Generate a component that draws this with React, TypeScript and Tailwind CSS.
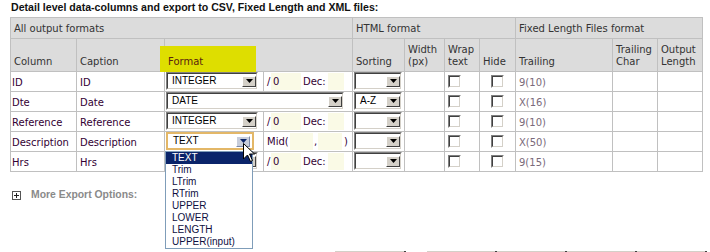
import React from "react";

const rows = [
  { col: "ID", cap: "ID", fmt: "INTEGER", kind: "num", sort: "", trail: "9(10)" },
  { col: "Dte", cap: "Date", fmt: "DATE", kind: "date", sort: "A-Z", trail: "X(16)" },
  { col: "Reference", cap: "Reference", fmt: "INTEGER", kind: "num", sort: "", trail: "9(10)" },
  { col: "Description", cap: "Description", fmt: "TEXT", kind: "text", sort: "", trail: "X(50)" },
  // format text of this row sits under the open list, so it is left blank
  { col: "Hrs", cap: "Hrs", fmt: "", kind: "num", sort: "", trail: "9(15)" },
];

const options = ["TEXT", "Trim", "LTrim", "RTrim", "UPPER", "LOWER", "LENGTH", "UPPER(input)"];

function Arrow({ color = "#000" }: { color?: string }) {
  return (
    <svg width="7" height="4" viewBox="0 0 7 4">
      <polygon points="0,0 7,0 3.5,4" fill={color} />
    </svg>
  );
}

function DropButton({ focused }: { focused?: boolean }) {
  return focused ? (
    <div className="flex h-[11px] w-[14px] items-center justify-center border border-t-[#ffffff] border-l-[#ffffff] border-r-[#7b88a8] border-b-[#7b88a8] bg-[#c7cddb]">
      <Arrow color="#0a246a" />
    </div>
  ) : (
    <div className="flex h-[11px] w-[14px] items-center justify-center border border-t-[#ffffff] border-l-[#ffffff] border-r-[#404040] border-b-[#404040] bg-[#d4d0c8]">
      <Arrow />
    </div>
  );
}

function Select({ value, className, focused }: { value: string; className: string; focused?: boolean }) {
  if (focused) {
    return (
      <div className={`flex h-[18px] items-center border-2 border-[#e3b767] bg-white pl-[5px] pr-[2px] ${className}`}>
        <span className="flex-1 font-['Liberation_Sans',sans-serif] text-[10px] leading-[12px] text-[#000]">{value}</span>
        <DropButton focused />
      </div>
    );
  }
  return (
    <div className={`h-[18px] border border-t-[#808080] border-l-[#808080] border-r-[#ffffff] border-b-[#ffffff] ${className}`}>
      <div className="flex h-full items-center border border-t-[#404040] border-l-[#404040] border-r-[#d4d0c8] border-b-[#d4d0c8] bg-white pl-[4px]">
        <span className="flex-1 font-['Liberation_Sans',sans-serif] text-[10px] leading-[12px] text-[#000]">{value}</span>
        <DropButton />
      </div>
    </div>
  );
}

function Check() {
  return (
    <div className="h-[13px] w-[13px] border border-t-[#808080] border-l-[#808080] border-r-[#ffffff] border-b-[#ffffff]">
      <div className="h-full w-full border border-t-[#404040] border-l-[#404040] border-r-[#d4d0c8] border-b-[#d4d0c8] bg-white" />
    </div>
  );
}

const td = "border border-[#c0c0c0] align-bottom";
const th = "border border-[#c0c0c0] bg-[#dcdcdc] align-bottom text-left font-normal text-[#333] pl-[3px] pb-[3px] leading-[12px]";

export default function App() {
  return (
    <div className="relative h-[252px] w-[710px] overflow-hidden bg-white font-['DejaVu_Sans',Verdana,sans-serif] text-[10px]">
      <div className="h-[17px] pl-[11px] pt-[1px] font-['Liberation_Sans',Arial,sans-serif] text-[10.6px] font-bold leading-[12px] text-[#111]">
        Detail level data-columns and export to CSV, Fixed Length and XML files:
      </div>

      <table className="ml-[10px] w-[693px] table-fixed border-collapse">
        <colgroup>
          <col className="w-[66px]" />
          <col className="w-[88px]" />
          <col className="w-[99px]" />
          <col className="w-[89px]" />
          <col className="w-[52px]" />
          <col className="w-[40px]" />
          <col className="w-[35px]" />
          <col className="w-[36px]" />
          <col className="w-[97px]" />
          <col className="w-[45px]" />
          <col className="w-[45px]" />
        </colgroup>
        <thead>
          <tr className="h-[21px]">
            <th colSpan={4} className={th}>All output formats</th>
            <th colSpan={4} className={th}>HTML format</th>
            <th colSpan={3} className={th}>Fixed Length Files format</th>
          </tr>
          <tr className="h-[33px]">
            <th className={th}>Column</th>
            <th className={th}>Caption</th>
            <th colSpan={2} className={th}>
              <span className="relative z-[1] text-[#5a2410]">Format</span>
            </th>
            <th className={th}>Sorting</th>
            <th className={th}>Width<br />(px)</th>
            <th className={th}>Wrap<br />text</th>
            <th className={th}>Hide</th>
            <th className={th}>Trailing</th>
            <th className={th}>Trailing<br />Char</th>
            <th className={th}>Output<br />Length</th>
          </tr>
        </thead>
        <tbody>
          {rows.map((r, i) => (
            <tr key={i} className="h-[20px]">
              <td className={`${td} pl-[1px] pb-[2px] leading-[12px] text-[#330033]`}>{r.col}</td>
              <td className={`${td} pl-[3px] pb-[2px] leading-[12px] text-[#330033]`}>{r.cap}</td>
              {r.kind === "date" ? (
                <td colSpan={2} className={`${td} pl-[1px] pb-[1px]`}>
                  <Select value="DATE" className="w-[178px]" />
                </td>
              ) : (
                <>
                  <td className={`${td} pl-[1px] pb-[1px]`}>
                    {r.kind === "text" ? (
                      <Select value={r.fmt} className="w-[88px]" focused />
                    ) : (
                      <Select value={r.fmt} className="w-[92px]" />
                    )}
                  </td>
                  <td className={`${td} pl-[3px] pb-[1px]`}>
                    {r.kind === "text" ? (
                      <div className="flex h-[17px] items-center text-[#330033]">
                        <span className="w-[23px]">Mid(</span>
                        <div className="h-[17px] w-[23px] bg-[#fafae6]" />
                        <span className="w-[5px] pl-[1px]">,</span>
                        <div className="h-[17px] w-[24px] bg-[#fafae6]" />
                        <span className="pl-[2px]">)</span>
                      </div>
                    ) : (
                      <div className="flex h-[17px] items-center text-[#330033]">
                        <span className="w-[4px]">/</span>
                        <div className="flex h-[17px] w-[30px] items-center bg-[#fafae6] pl-[2px]">0</div>
                        <span className="w-[27px] pl-[2px]">Dec:</span>
                        <div className="h-[17px] w-[16px] bg-[#fafae6]" />
                      </div>
                    )}
                  </td>
                </>
              )}
              <td className={`${td} pl-[1px] pb-[1px]`}>
                <Select value={r.sort} className="w-[48px]" />
              </td>
              <td className={td} />
              <td className={`${td} pl-[3px] pb-[3px]`}>
                <Check />
              </td>
              <td className={`${td} pb-[3px]`}>
                <div className="flex justify-center">
                  <Check />
                </div>
              </td>
              <td className={`${td} pl-[3px] pb-[2px] leading-[12px] text-[#7a6a7a]`}>{r.trail}</td>
              <td className={td} />
              <td className={td} />
            </tr>
          ))}
        </tbody>
      </table>

      <div className="mt-[17px] flex h-[12px] items-center pl-[12px]">
        <div className="flex h-[9px] w-[9px] items-center justify-center border border-[#555] bg-white">
          <svg width="5" height="5" viewBox="0 0 5 5">
            <rect x="0" y="2" width="5" height="1" fill="#222" />
            <rect x="2" y="0" width="1" height="5" fill="#222" />
          </svg>
        </div>
        <span className="pl-[10px] font-['Liberation_Sans',Arial,sans-serif] text-[10.4px] font-bold text-[#8a8a8a]">More Export Options:</span>
      </div>

      <div className="mt-[50px] flex pl-[335px]">
        <div className="h-[22px] w-[71px] border-r-2 border-[#404040] bg-[#d4d0c8]" />
        <div className="ml-[21px] h-[22px] w-[70px] border-r-2 border-[#404040] bg-[#d4d0c8]" />
        <div className="h-[22px] w-[70px] border-r-2 border-[#404040] bg-[#d4d0c8]" />
        <div className="h-[22px] w-[70px] border-r-2 border-[#404040] bg-[#d4d0c8]" />
        <div className="h-[22px] w-[70px] border-r-2 border-[#404040] bg-[#d4d0c8]" />
      </div>

      {/* yellow marker over the Format header */}
      <div className="absolute left-[160px] top-[46px] z-0 h-[26px] w-[96px] bg-[#dede00]" />

      {/* open dropdown list */}
      <div className="absolute left-[165px] top-[151px] z-10 w-[88px] border border-[#7f9db9] bg-white font-['Liberation_Sans',Arial,sans-serif] text-[10px]">
        {options.map((o, i) => (
          <div
            key={o}
            className={`h-[12px] pl-[6px] leading-[12px] ${i === 0 ? "bg-[#0a246a] text-white" : "text-[#0f0f3f]"}`}
          >
            {o}
          </div>
        ))}
      </div>

      {/* mouse pointer */}
      <svg className="absolute left-[243px] top-[143px] z-20" width="13" height="20" viewBox="0 0 13 20">
        <polygon points="0.5,0.5 0.5,16 4.5,12 7.5,18.5 9.5,17.5 6.5,11 11.5,11" fill="#fff" stroke="#000" strokeWidth="1" />
      </svg>
    </div>
  );
}
